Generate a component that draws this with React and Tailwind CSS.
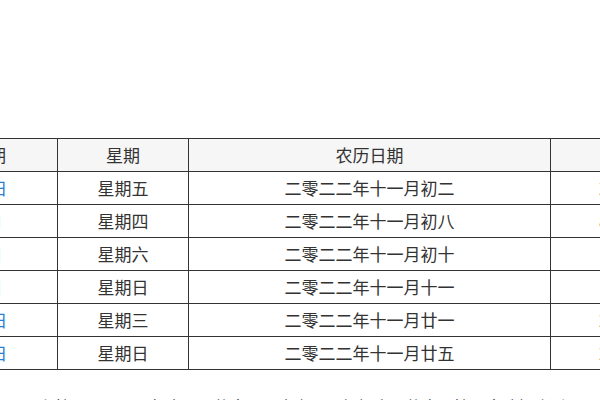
const rows = [
  { date: "2022年11月25日", week: "星期五", lunar: "二零二二年十一月初二", left: "2天" },
  { date: "2022年12月1日", week: "星期四", lunar: "二零二二年十一月初八", left: "8天" },
  { date: "2022年12月3日", week: "星期六", lunar: "二零二二年十一月初十", left: "10天" },
  { date: "2022年12月4日", week: "星期日", lunar: "二零二二年十一月十一", left: "11天" },
  { date: "2022年12月14日", week: "星期三", lunar: "二零二二年十一月廿一", left: "21天" },
  { date: "2022年12月18日", week: "星期日", lunar: "二零二二年十一月廿五", left: "25天" },
]

const cell = "h-[33px] flex items-center border-r border-b border-[#333]"

export default function App() {
  return (
    <div
      className="w-[600px] h-[400px] overflow-hidden bg-white text-[#333]"
      style={{ fontFamily: '"Noto Sans CJK SC", "Noto Sans", sans-serif' }}
    >
      <div className="pt-[138px]">
        <div className="ml-[-169px] w-max grid grid-cols-[227px_131px_362px_200px] border-t border-[#333] text-[17px]">
          {/* 表头 */}
          <div className={`${cell} bg-[#f6f6f6] justify-end pr-[51px]`}>公历日期</div>
          <div className={`${cell} bg-[#f6f6f6] justify-center`}>星期</div>
          <div className={`${cell} bg-[#f6f6f6] justify-center`}>农历日期</div>
          <div className={`${cell} bg-[#f6f6f6] justify-start pl-[60px]`}>距今天数</div>

          {rows.map((r) => (
            <div key={r.date} className="contents">
              <div className={`${cell} justify-center text-[#2b7fd0]`}>{r.date}</div>
              <div className={`${cell} justify-center`}>{r.week}</div>
              <div className={`${cell} justify-center`}>{r.lunar}</div>
              <div className={`${cell} justify-start pl-[48px]`}>{r.left}</div>
            </div>
          ))}
        </div>
      </div>

      <p className="mt-[22px] px-[22px] text-[16px] leading-7 text-[#333]">
        以上就是二零二二年十一月的吉日，大家可以根据自己的实际情况来选择合适的日子，祝大家万事顺意。
      </p>
    </div>
  )
}
